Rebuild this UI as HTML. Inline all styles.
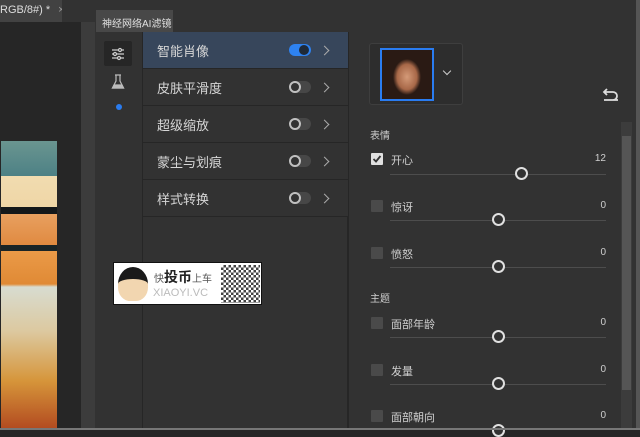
<!DOCTYPE html>
<html><head><meta charset="utf-8"><style>
*{margin:0;padding:0;box-sizing:border-box}
body{width:640px;height:430px;overflow:hidden;background:#262626;position:relative;font-family:"Liberation Sans","Noto Sans CJK SC",sans-serif;color:#d0d0d0}
.a{position:absolute}
.row{position:absolute;left:143px;width:205px;height:37px;border-bottom:1px solid #262626;background:#323232}
.row span{position:absolute;left:14px;top:9px;font-size:13px;color:#d6d6d6}
.tg{position:absolute;left:146px;top:12px;width:22px;height:12px;border-radius:6px;background:#474747}
.tg i{position:absolute;left:0;top:0;width:12px;height:12px;border-radius:50%;border:2px solid #c0c0c0;background:#323232}
.chev{position:absolute;left:178px;top:15px;width:7px;height:7px;border-right:1.5px solid #aaa;border-top:1.5px solid #aaa;transform:rotate(45deg)}
.lbl{position:absolute;left:391px;font-size:11px;color:#cfcfcf}
.val{position:absolute;right:34px;font-size:10px;color:#cfcfcf;text-align:right}
.cb{position:absolute;left:371px;width:12px;height:12px;background:#4a4a4a;border-radius:1px}
.tr{position:absolute;left:390px;width:216px;height:1px;background:#4d4d4d}
.th{position:absolute;width:13px;height:13px;border-radius:50%;border:2px solid #e0e0e0;background:#323232}
</style></head><body>
<div class="a" style="left:0;top:0;width:640px;height:30px;background:#323232"></div>
<div class="a" style="left:0;top:0;width:62px;height:22px;background:#424242;font-size:11px;color:#ddd;padding:4px 0 0 0;white-space:nowrap;overflow:hidden">RGB/8#) *<span style="margin-left:8px;color:#999">×</span></div>
<div class="a" style="left:0;top:22px;width:82px;height:408px;background:#262626"></div>
<div class="a" style="left:1px;top:141px;width:56px;height:288px;background:linear-gradient(#6a9590 0,#4d8185 35px,#f1dcb0 35px,#efd6a6 66px,#14181a 66px,#14181a 73px,#e8a060 73px,#e08a40 104px,#1a2426 104px,#1a2426 110px,#ea9a48 110px,#e08a35 143px,#d8dcd0 146px,#dcc9a0 190px,#d6953a 240px,#b24a20 288px)"></div>
<div class="a" style="left:81px;top:22px;width:14px;height:408px;background:#3c3c3c"></div>
<div class="a" style="left:95px;top:8px;width:545px;height:24px;background:#323232"></div>
<div class="a" style="left:96px;top:10px;width:77px;height:22px;background:#484848;font-size:10px;color:#e0e0e0;padding:5px 0 0 6px;white-space:nowrap">神经网络AI滤镜</div>
<div class="a" style="left:95px;top:32px;width:48px;height:398px;background:#323232;border-right:1px solid #262626"></div>
<div class="a" style="left:104px;top:41px;width:28px;height:25px;background:#262626;border-radius:2px"></div>
<svg class="a" style="left:110px;top:46px" width="16" height="16" viewBox="0 0 16 16" stroke="#ccc" fill="none" stroke-width="1.2"><path d="M2 4h12M2 8h12M2 12h12"/><circle cx="10" cy="4" r="1.5" fill="#262626"/><circle cx="5" cy="8" r="1.5" fill="#262626"/><circle cx="9" cy="12" r="1.5" fill="#262626"/></svg>
<svg class="a" style="left:111px;top:74px" width="14" height="16" viewBox="0 0 14 16" fill="none" stroke="#bbb" stroke-width="1.2"><path d="M4 1h6M5 1v6L1.5 14h11L9 7V1"/><path d="M3 11h8l1.5 3h-11z" fill="#bbb"/></svg>
<div class="a" style="left:116px;top:104px;width:6px;height:6px;border-radius:50%;background:#2a7cf0"></div>
<div class="a" style="left:143px;top:32px;width:205px;height:398px;background:#323232;border-right:1px solid #262626"></div>
<div class="row" style="top:32px;background:#37465b"><span>智能肖像</span><div class="tg" style="background:#2e82f0"><i style="left:10px;border-color:#1f2a38;background:#1f2a38;width:10px;height:10px;top:1px"></i></div><div class="chev"></div></div>
<div class="row" style="top:69px"><span>皮肤平滑度</span><div class="tg"><i></i></div><div class="chev"></div></div>
<div class="row" style="top:106px"><span>超级缩放</span><div class="tg"><i></i></div><div class="chev"></div></div>
<div class="row" style="top:143px"><span>蒙尘与划痕</span><div class="tg"><i></i></div><div class="chev"></div></div>
<div class="row" style="top:180px"><span>样式转换</span><div class="tg"><i></i></div><div class="chev"></div></div>
<div class="a" style="left:113px;top:262px;width:149px;height:43px;background:#fff;border:1px solid #111;font-size:10px;color:#555">
<div class="a" style="left:4px;top:4px;width:30px;height:34px;border-radius:50% 50% 40% 40%;background:#f2d6b0;border-top:12px solid #1a1a1a"></div>
<div class="a" style="left:40px;top:4px;font-size:10px;white-space:nowrap">快<b style="font-size:14px;color:#222">投币</b>上车</div>
<div class="a" style="left:39px;top:24px;font-size:11px;color:#bbb;white-space:nowrap">XIAOYI.VC</div>
<div class="a" style="left:107px;top:2px;width:39px;height:38px;background:repeating-conic-gradient(#222 0 25%,#fff 0 50%) 0 0/5px 5px;opacity:.85"></div>
</div>
<div class="a" style="left:349px;top:32px;width:291px;height:398px;background:#323232"></div>
<div class="a" style="left:369px;top:43px;width:94px;height:62px;border:1px solid #3e3e3e;border-radius:3px;background:#2d2d2d"></div>
<div class="a" style="left:380px;top:48px;width:54px;height:53px;border:2px solid #2a7cf0;background:radial-gradient(ellipse 14px 18px at 50% 55%,#d49a78,#a86848 70%,#2a1a14 100%)"></div>
<div class="a" style="left:444px;top:68px;width:6px;height:6px;border-right:1.5px solid #ccc;border-bottom:1.5px solid #ccc;transform:rotate(45deg)"></div>
<svg class="a" style="left:602px;top:88px" width="18" height="14" viewBox="0 0 18 14" fill="none" stroke="#ddd" stroke-width="1.8"><path d="M2 12h14M5 1L2 4l3 3M2 4h9a4 4 0 010 8"/></svg>
<div class="a" style="left:621px;top:122px;width:11px;height:308px;background:#3c3c3c"></div>
<div class="a" style="left:622px;top:136px;width:9px;height:254px;background:#555"></div>
<div class="a" style="left:370px;top:127px;font-size:10px;color:#cfcfcf">表情</div>
<div class="a" style="left:370px;top:290px;font-size:10px;color:#cfcfcf">主题</div>
<div class="cb" style="top:153px;background:#e0e0e0"></div>
<svg class="a" style="left:372px;top:154px" width="10" height="10" viewBox="0 0 10 10"><path d="M1.5 5l2.5 2.5L8.5 2" stroke="#333" stroke-width="1.8" fill="none"/></svg>
<div class="lbl" style="top:152px">开心</div><div class="val" style="top:153px">12</div><div class="tr" style="top:174px"></div><div class="th" style="left:515px;top:167px"></div>
<div class="cb" style="top:200px"></div><div class="lbl" style="top:199px">惊讶</div><div class="val" style="top:200px">0</div><div class="tr" style="top:220px"></div><div class="th" style="left:492px;top:213px"></div>
<div class="cb" style="top:247px"></div><div class="lbl" style="top:246px">愤怒</div><div class="val" style="top:247px">0</div><div class="tr" style="top:267px"></div><div class="th" style="left:492px;top:260px"></div>
<div class="cb" style="top:317px"></div><div class="lbl" style="top:316px">面部年龄</div><div class="val" style="top:317px">0</div><div class="tr" style="top:337px"></div><div class="th" style="left:492px;top:330px"></div>
<div class="cb" style="top:364px"></div><div class="lbl" style="top:363px">发量</div><div class="val" style="top:364px">0</div><div class="tr" style="top:384px"></div><div class="th" style="left:492px;top:377px"></div>
<div class="cb" style="top:410px"></div><div class="lbl" style="top:409px">面部朝向</div><div class="val" style="top:410px">0</div><div class="th" style="left:492px;top:424px"></div>
<div class="a" style="left:636px;top:0;width:4px;height:430px;background:#555"></div>
<div class="a" style="left:0;top:428px;width:640px;height:2px;background:#777"></div>
</body></html>
